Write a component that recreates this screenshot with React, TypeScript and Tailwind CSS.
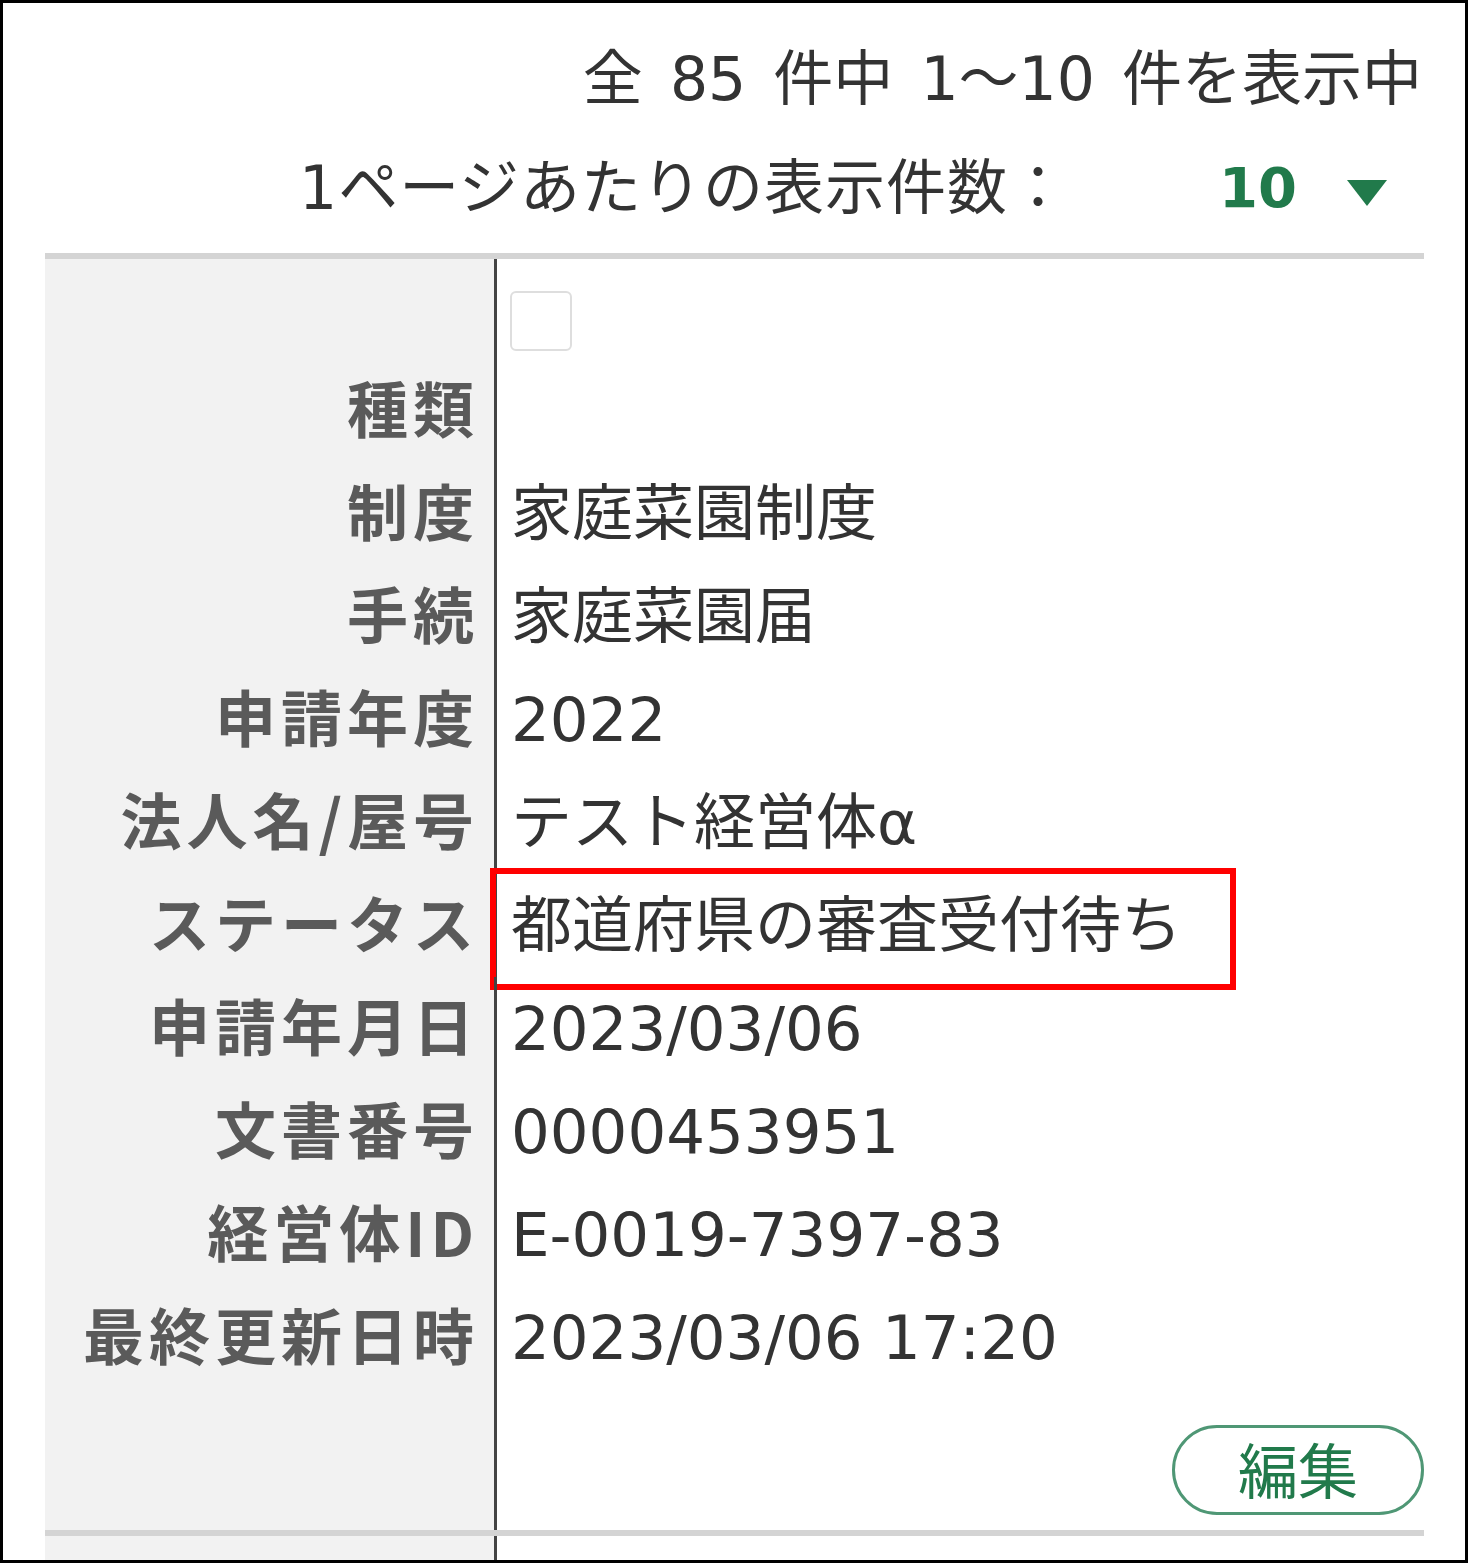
import React from 'react';

const rows: { label: string; value: string; highlight?: boolean }[] = [
  { label: '種類', value: '' },
  { label: '制度', value: '家庭菜園制度' },
  { label: '手続', value: '家庭菜園届' },
  { label: '申請年度', value: '2022' },
  { label: '法人名/屋号', value: 'テスト経営体α' },
  { label: 'ステータス', value: '都道府県の審査受付待ち', highlight: true },
  { label: '申請年月日', value: '2023/03/06' },
  { label: '文書番号', value: '0000453951' },
  { label: '経営体ID', value: 'E-0019-7397-83' },
  { label: '最終更新日時', value: '2023/03/06 17:20' },
];

// latin glyphs from DejaVu (wide digits), kana/kanji from Noto CJK
const font = "font-['DejaVu_Sans','Noto_Sans_CJK_JP',sans-serif]";
const jp = "font-['Noto_Sans_CJK_JP',sans-serif]";

export default function App() {
  return (
    <div className={`w-[1468px] h-[1563px] bg-white border-[3px] border-black overflow-hidden ${font}`}>
      <div className="pl-[42px] pr-[41px]">
        {/* header */}
        <div className="h-[250px] flex flex-col text-[#333]">
          <div className="pt-[36px] text-right text-[60px] leading-[80px] pr-[2px] [word-spacing:8px]">
            全 85 件中 1～10 件を表示中
          </div>
          <div className="mt-[29px] flex items-center justify-end text-[60px] leading-[80px] pr-[37px]">
            <span className="tracking-[1px]">1ページあたりの表示件数：</span>
            <span className="ml-[150px] font-bold text-[56px] text-[#217a4b]">10</span>
            <svg width="40" height="26" viewBox="0 0 40 26" className="ml-[50px] mt-[10px]">
              <polygon points="0,0 40,0 20,26" fill="#217a4b" />
            </svg>
          </div>
        </div>

        <div className="border-t-[6px] border-[#d4d4d4]">
          <div className="grid grid-cols-[449px_1fr]">
            {/* checkbox row */}
            <div className="bg-[#f2f2f2] h-[100px]" />
            <div className="border-l-[3px] border-[#444] pl-[13px] pt-[32px]">
              <div className="w-[62px] h-[60px] rounded-[6px] border-[2px] border-[#dedede] bg-white" />
            </div>

            {rows.map((r) => (
              <React.Fragment key={r.label}>
                <div className={`bg-[#f2f2f2] h-[103px] flex items-center justify-end pr-[15px] pb-[8px] text-[61px] font-bold text-[#5a5a5a] tracking-[5px] ${jp}`}>
                  {r.label}
                </div>
                <div className="relative border-l-[3px] border-[#444] h-[103px] flex items-center pl-[14px] text-[61px] text-[#333]">
                  {r.value}
                  {r.highlight && (
                    <div className="absolute left-[-7px] top-[-6px] w-[746px] h-[122px] border-[6px] border-[#ff0000]" />
                  )}
                </div>
              </React.Fragment>
            ))}

            {/* action row */}
            <div className="bg-[#f2f2f2] h-[141px]" />
            <div className="border-l-[3px] border-[#444] flex justify-end items-start pt-[36px]">
              <button className={`w-[252px] h-[90px] rounded-full border-[3px] border-[#4f9775] text-[#217a4b] text-[60px] leading-none flex items-center justify-center pb-[4px] ${jp}`}>
                編集
              </button>
            </div>
          </div>

          <div className="border-t-[6px] border-[#d4d4d4] grid grid-cols-[449px_1fr]">
            <div className="bg-[#f2f2f2] h-[40px]" />
            <div className="border-l-[3px] border-[#444] h-[40px]" />
          </div>
        </div>
      </div>
    </div>
  );
}
